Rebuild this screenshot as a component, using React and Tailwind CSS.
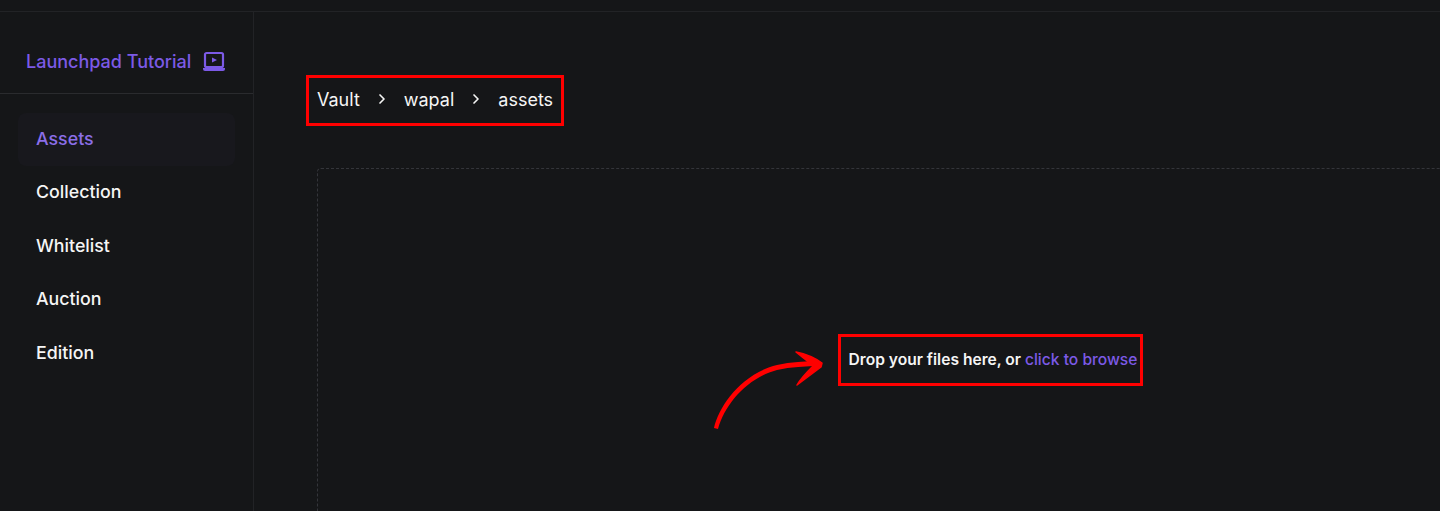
import { Fragment } from "react";
import { ChevronRight } from "lucide-react";

const navItems = ["Assets", "Collection", "Whitelist", "Auction", "Edition"];
const crumbs = ["Vault", "wapal", "assets"];

function TutorialIcon() {
  return (
    <svg width="24" height="22" viewBox="0 0 24 22" fill="none" className="shrink-0">
      <rect x="3" y="2" width="18" height="14" rx="1.5" stroke="#7c5ae6" strokeWidth="2.2" />
      <path d="M10 6.5 L15 9 L10 11.5 Z" fill="#7c5ae6" />
      <path d="M1 17 H23 V18 Q23 20 21 20 H3 Q1 20 1 18 Z" fill="#7c5ae6" />
    </svg>
  );
}

function CurvedArrow() {
  return (
    <svg width="120" height="84" viewBox="0 0 120 84" fill="none" className="absolute left-[709px] top-[350px]">
      <path d="M5 78 C10 56 32 24 68 15 C82 12 96 11 110 11 L112 16 C96 16 82 17 68 20 C38 28 16 54 9 79 Z" fill="#ff0000" />
      <path d="M87 2 C97 4 106 8 113 13 L112 17 C104 23 96 29 88 35 C92 28 98 22 104 16 C99 11 93 7 87 2 Z" fill="#ff0000" stroke="#ff0000" strokeWidth="1.5" strokeLinejoin="round" />
    </svg>
  );
}

export default function App() {
  return (
    <div className="relative h-[511px] w-[1440px] overflow-hidden bg-[#151618] font-['Inter',sans-serif] text-white">
      <div className="h-3 border-b border-[#222326]" />
      <div className="flex h-[499px]">
        <aside className="w-[254px] shrink-0 border-r border-[#222326]">
          <div className="flex h-[82px] items-center gap-[11px] border-b border-[#2a2b2e] pl-[26px] pt-[18px]">
            <span className="text-[18px] font-medium text-[#7c5ae6]">Launchpad Tutorial</span>
            <TutorialIcon />
          </div>
          <nav className="flex flex-col px-[18px] pt-[18.5px]">
            {navItems.map((item, idx) => (
              <div
                key={item}
                className={`flex h-[53.5px] items-center rounded-lg pl-[18px] text-[17.8px] font-medium ${
                  idx === 0 ? "bg-[#18181d] text-[#8b6ee8]" : "text-[#f5f5f5]"
                }`}
              >
                {item}
              </div>
            ))}
          </nav>
        </aside>
        <main className="min-w-0 flex-1 pl-[63px]">
          <div className="flex h-[156px] items-start pt-[75px]">
            <div className="flex h-6 items-center text-[18px] text-[#f5f5f5]">
              {crumbs.map((crumb, idx) => (
                <Fragment key={crumb}>
                  {idx > 0 && <ChevronRight className="mx-[14px] size-[16px]" strokeWidth={2.5} />}
                  <span>{crumb}</span>
                </Fragment>
              ))}
            </div>
          </div>
          <div className="flex h-[383px] w-[1352px] items-center justify-center rounded border border-dashed border-[#34353a]">
            <p className="text-[15.6px] font-semibold text-[#f5f5f5]">
              Drop your files here, or <span className="font-medium text-[#7c5ae6]">click to browse</span>
            </p>
          </div>
        </main>
      </div>
      {/* annotations on top of the screenshot */}
      <div className="absolute left-[306px] top-[75px] h-[51px] w-[258px] border-[3px] border-[#ff0000]" />
      <div className="absolute left-[838px] top-[334px] h-[52px] w-[305px] border-[3px] border-[#ff0000]" />
      <CurvedArrow />
    </div>
  );
}
